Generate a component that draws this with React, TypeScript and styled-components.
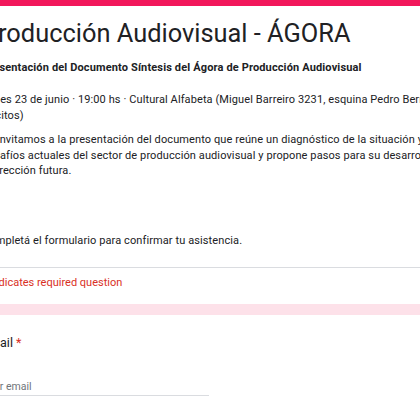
import styled, { createGlobalStyle } from 'styled-components'

const GlobalStyle = createGlobalStyle`
	html, body {
		margin: 0;
		padding: 0;
		background: #fde1e9;
	}
	body {
		font-family: Roboto, 'Liberation Sans', Arial, sans-serif;
		color: #202124;
	}
`

const App: React.FC = () => {
	return (
		<>
			<GlobalStyle />
			<Viewport>
				<Column>
					<Card>
						<AccentBar />
						<Header>
							<Title>Producción Audiovisual - ÁGORA</Title>
							<Description>
								<Lead>Presentación del Documento Síntesis del Ágora de Producción Audiovisual</Lead>
								<Para>
									Lunes 23 de junio · 19:00 hs · Cultural Alfabeta (Miguel Barreiro 3231, esquina Pedro Berro,
									<br />
									Pocitos)
								</Para>
								<Para>
									Te invitamos a la presentación del documento que reúne un diagnóstico de la situación y
									<br />
									desafíos actuales del sector de producción audiovisual y propone pasos para su desarrollo
									<br />y dirección futura.
								</Para>
								<Para $gap={54}>Completá el formulario para confirmar tu asistencia.</Para>
							</Description>
						</Header>
						<Required>* Indicates required question</Required>
					</Card>
					<Card>
						<Question>
							<Label>
								Email <Star>*</Star>
							</Label>
							<Input placeholder="Your email" />
						</Question>
					</Card>
				</Column>
			</Viewport>
		</>
	)
}

const Star = styled.span`
	color: #d93025;
`

const Input = styled.input`
	display: block;
	width: 227px;
	margin-top: 23px;
	padding: 4px 0 2px;
	border: none;
	border-bottom: 1px solid #dadce0;
	outline: none;
	background: transparent;
	font-family: Roboto, 'Liberation Sans', Arial, sans-serif;
	font-size: 10.5px;
	line-height: 13px;
	color: #202124;

	&::placeholder {
		color: #70757a;
	}
`

const Label = styled.div`
	font-size: 12.5px;
	line-height: 20px;
	color: #202124;
`

const Question = styled.div`
	padding: 18px 24px 40px;
`

const Required = styled.div`
	padding: 7px 24px 14px;
	border-top: 1px solid #dadce0;
	font-size: 11px;
	line-height: 15px;
	color: #d93025;
`

const Para = styled.p<{ $gap?: number }>`
	margin: ${({ $gap }) => $gap ?? 9}px 0 0;
	font-size: 11px;
	line-height: 15.5px;
	letter-spacing: 0.1px;
	white-space: nowrap;
`

const Lead = styled.p`
	margin: 0 0 17px;
	font-size: 11px;
	font-weight: 700;
	line-height: 15px;
	letter-spacing: 0.14px;
	white-space: nowrap;
`

const Description = styled.div`
	margin-top: 10px;
`

const Title = styled.h1`
	margin: 0;
	font-size: 25.4px;
	font-weight: 400;
	line-height: 34px;
	white-space: nowrap;
	color: #202124;
`

const Header = styled.div`
	padding: 10px 24px 19px;
`

const AccentBar = styled.div`
	height: 6px;
	background: #f2175b;
`

const Card = styled.section`
	background: #ffffff;
	border-radius: 8px;
	overflow: hidden;
`

const Column = styled.div`
	display: flex;
	flex-direction: column;
	gap: 11px;
	width: 660px;
	margin-left: -42px;
`

const Viewport = styled.div`
	width: 420px;
	height: 420px;
	overflow: hidden;
`

export default App
